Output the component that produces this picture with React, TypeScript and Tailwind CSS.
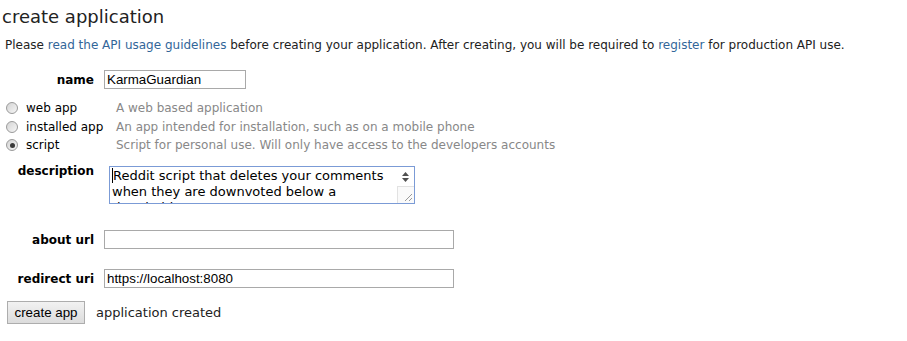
import React from 'react'

const verdana = "font-['DejaVu_Sans',Verdana,sans-serif]"
const arial = "font-['Liberation_Sans',Arial,sans-serif]"

const APP_TYPES = [
  { id: 'web', label: 'web app', desc: 'A web based application', checked: false, h: 'h-[19px]' },
  { id: 'installed', label: 'installed app', desc: 'An app intended for installation, such as on a mobile phone', checked: false, h: 'h-[19px]' },
  { id: 'script', label: 'script', desc: 'Script for personal use. Will only have access to the developers accounts', checked: true, h: 'h-[18px]' },
]

const Radio = ({ checked }: { checked: boolean }) => (
  <span className="flex h-[12px] w-[12px] items-center justify-center rounded-full border border-[#9a9a9a] bg-gradient-to-br from-[#d4d4d4] to-[#f6f6f6]">
    {checked && <span className="h-[5px] w-[5px] rounded-full bg-[#3a3a3a]" />}
  </span>
)

const Label = ({ children }: { children: React.ReactNode }) => (
  <label className="block w-[94px] shrink-0 text-right font-bold text-black">{children}</label>
)

export default function App() {
  return (
    <div className={`h-[341px] w-[907px] overflow-hidden bg-white text-[12px] text-[#222] ${verdana}`}>
      <h1 className="pl-[2px] pt-[6px] text-[18px] font-normal leading-[22px] text-[#222]">create application</h1>
      <p className="mt-[9px] pl-[5px] leading-[16px]">
        Please <a className="text-[#369]">read the API usage guidelines</a> before creating your application. After
        creating, you will be required to <a className="text-[#369]">register</a> for production API use.
      </p>

      <div className="mt-[17px] flex h-[19px] items-center">
        <Label>name</Label>
        <input
          readOnly
          value="KarmaGuardian"
          className={`ml-[10px] h-[19px] w-[142px] border border-[#a9a9a9] px-[2px] text-[13.33px] text-black outline-none ${arial}`}
        />
      </div>

      <div className="mt-[9px]">
        {APP_TYPES.map((t) => (
          <div key={t.id} className={`flex items-center ${t.h}`}>
            <span className="ml-[6px]">
              <Radio checked={t.checked} />
            </span>
            <span className="ml-[8px] w-[90px] text-black">{t.label}</span>
            <span className="text-[#888]">{t.desc}</span>
          </div>
        ))}
      </div>

      <div className="mt-[12px] flex">
        <div className="-mt-[3px] leading-[16px]">
          <Label>description</Label>
        </div>
        <div className="ml-[15px] flex h-[38px] w-[306px] shrink-0 border border-[#7b9bd6] bg-white">
          <div className={`flex-1 overflow-hidden pl-[2px] pt-[1px] text-[13px] leading-[16px] text-black ${verdana}`}>
            <span className="border-l border-black">R</span>eddit script that deletes your comments when they are downvoted
            below a threshold
          </div>
          <div className="flex w-[17px] flex-col">
            <div className="flex flex-1 flex-col items-center justify-center gap-[2px]">
              <svg width="7" height="4" viewBox="0 0 7 4">
                <path d="M0 4 L3.5 0 L7 4 Z" fill="#505050" />
              </svg>
              <svg width="7" height="4" viewBox="0 0 7 4">
                <path d="M0 0 L3.5 4 L7 0 Z" fill="#505050" />
              </svg>
            </div>
            <div className="relative h-[17px] border-l border-t border-[#e2e2e2] bg-[#fafafa]">
              <svg width="16" height="16" viewBox="0 0 16 16" className="absolute bottom-0 right-0">
                <path d="M14 7 L7 14 M14 11 L11 14" stroke="#9a9a9a" strokeWidth="1" />
              </svg>
            </div>
          </div>
        </div>
      </div>

      <div className="mt-[26px] flex h-[19px] items-center">
        <Label>about url</Label>
        <input
          readOnly
          value=""
          className={`ml-[10px] h-[19px] w-[350px] border border-[#a9a9a9] px-[2px] text-[13.33px] text-black outline-none ${arial}`}
        />
      </div>

      <div className="mt-[20px] flex h-[19px] items-center">
        <Label>redirect uri</Label>
        <input
          readOnly
          value="https://localhost:8080"
          className={`ml-[10px] h-[19px] w-[350px] border border-[#a9a9a9] px-[2px] text-[13.33px] text-black outline-none ${arial}`}
        />
      </div>

      <div className="mt-[13px] flex items-center">
        <button
          className={`ml-[7px] h-[23px] w-[78px] border border-[#adadad] bg-gradient-to-b from-[#f2f2f2] to-[#dcdcdc] text-[13.33px] text-black ${arial}`}
        >
          create app
        </button>
        <span className="ml-[11px] text-[13px] text-[#222]">application created</span>
      </div>
    </div>
  )
}
